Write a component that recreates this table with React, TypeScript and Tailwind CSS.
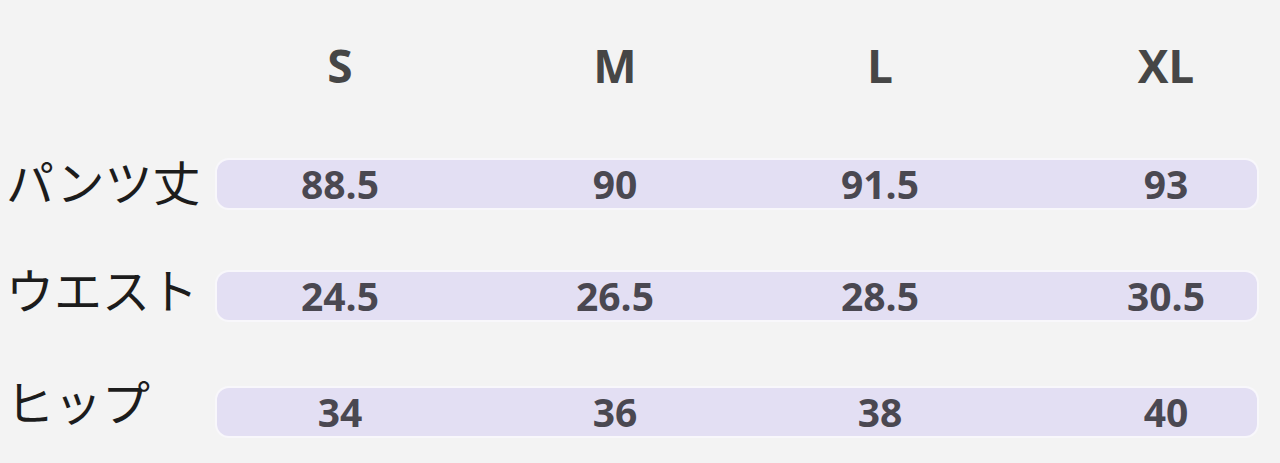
const sizes = ['S', 'M', 'L', 'XL'];

// left margins that put each 120px cell on its column centre
const colMargins = ['ml-[63px]', 'ml-[155px]', 'ml-[145px]', 'ml-[166px]'];

const rows = [
  { label: 'パンツ丈', values: ['88.5', '90', '91.5', '93'], mt: 'mt-[71px]', lift: 'mb-[8px]' },
  { label: 'ウエスト', values: ['24.5', '26.5', '28.5', '30.5'], mt: 'mt-[64px]', lift: 'mb-[16px]' },
  { label: 'ヒップ', values: ['34', '36', '38', '40'], mt: 'mt-[68px]', lift: 'mb-[24px]' },
];

export default function App() {
  return (
    <div className="w-[1280px] h-[463px] overflow-hidden bg-[#f3f3f3] pt-[41px] font-['Open_Sans','Noto_Sans_CJK_JP',sans-serif]">
      {/* size header */}
      <div className="flex pl-[217px] h-[48px]">
        {sizes.map((s, i) => (
          <div key={s} className={`${colMargins[i]} w-[120px] text-center text-[46px] leading-[48px] font-bold text-[#464646]`}>
            {s}
          </div>
        ))}
      </div>

      {rows.map((r) => (
        <div key={r.label} className={`${r.mt} h-[48px] flex items-center`}>
          <div className={`w-[217px] shrink-0 pl-[6px] ${r.lift} text-[48px] leading-[52px] text-[#1c1c1c] font-['Noto_Sans_CJK_JP',sans-serif]`}>
            {r.label}
          </div>
          <div className="w-[1040px] h-[48px] shrink-0 rounded-[12px] bg-[#e3dff3] ring-2 ring-[#f8f7fb] flex items-center">
            {r.values.map((v, i) => (
              <div key={i} className={`${colMargins[i]} w-[120px] text-center text-[39px] leading-[48px] font-bold text-[#4a4851]`}>
                {v}
              </div>
            ))}
          </div>
        </div>
      ))}
    </div>
  );
}
